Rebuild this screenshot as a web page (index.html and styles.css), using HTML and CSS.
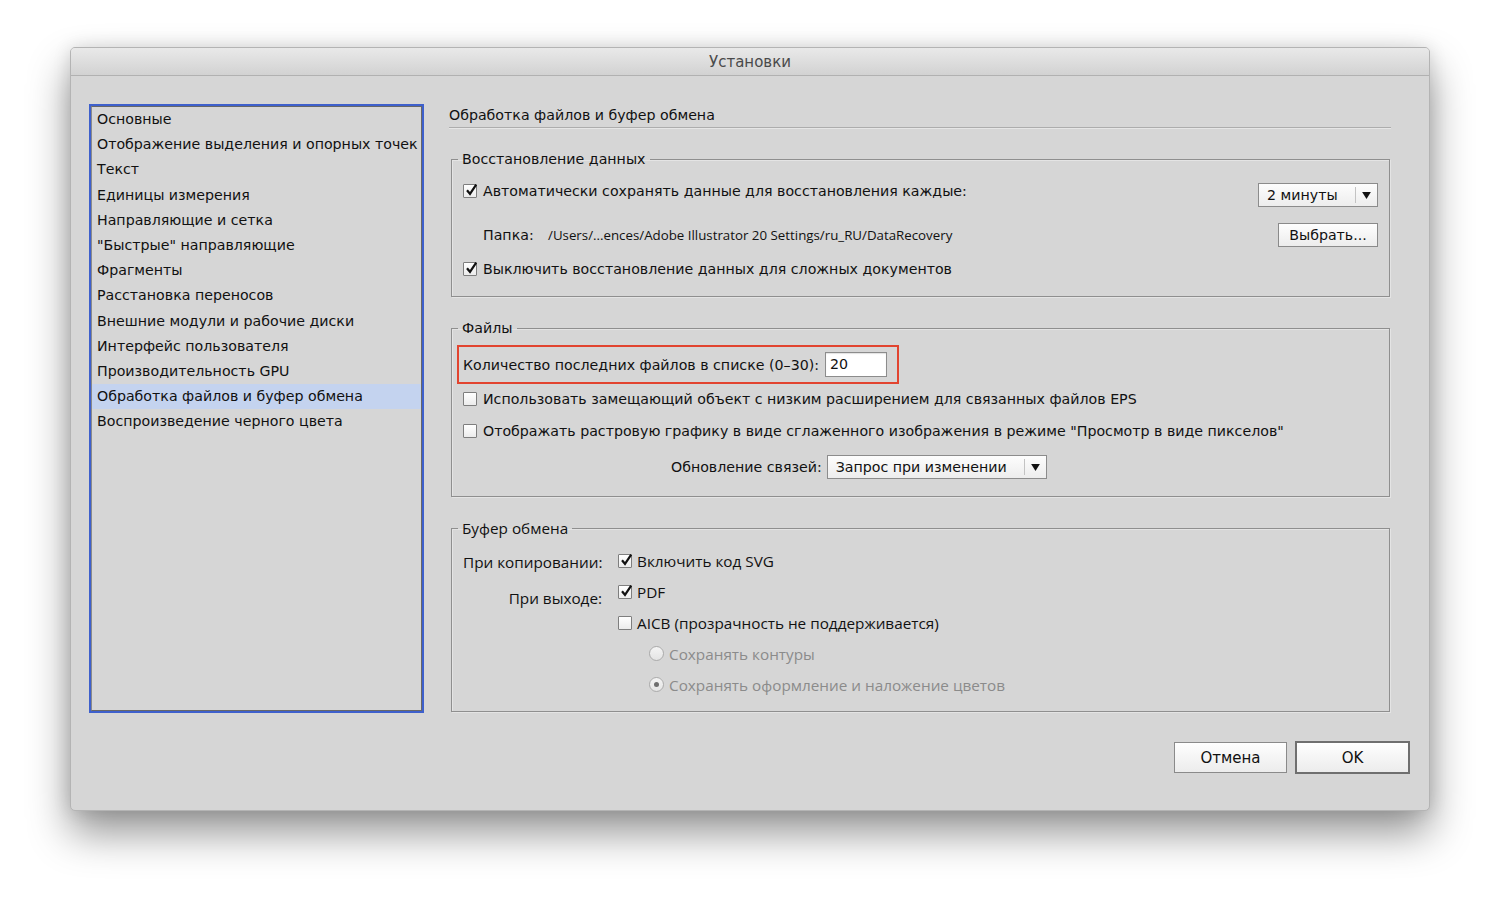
FILE: index.html
```html
<!DOCTYPE html>
<html lang="ru">
<head>
<meta charset="utf-8">
<title>Установки</title>
<link rel="stylesheet" href="styles.css">
</head>
<body>
<div class="window">
  <div class="titlebar">Установки</div>
  <div class="body">
    <div class="sidebar">
      <ul class="nav">
        <li>Основные</li>
        <li>Отображение выделения и опорных точек</li>
        <li>Текст</li>
        <li>Единицы измерения</li>
        <li>Направляющие и сетка</li>
        <li>"Быстрые" направляющие</li>
        <li>Фрагменты</li>
        <li>Расстановка переносов</li>
        <li>Внешние модули и рабочие диски</li>
        <li>Интерфейс пользователя</li>
        <li>Производительность GPU</li>
        <li class="selected">Обработка файлов и буфер обмена</li>
        <li>Воспроизведение черного цвета</li>
      </ul>
    </div>
    <div class="main">
      <div class="heading">Обработка файлов и буфер обмена</div>

      <fieldset class="group g1">
        <legend>Восстановление данных</legend>
        <div class="row r1">
          <label class="check">
            <span class="cb"><svg viewBox="0 0 14 14" width="14" height="14"><path d="M3 7.2 L6 10.8 L12.2 1.6" fill="none" stroke="#111" stroke-width="2.2"/></svg></span>
            <span>Автоматически сохранять данные для восстановления каждые:</span>
          </label>
          <div class="select s-min"><span class="val">2 минуты</span><span class="arrow"><svg viewBox="0 0 10 8" width="9" height="7"><path d="M0 0 H10 L5 8 Z" fill="#111"/></svg></span></div>
        </div>
        <div class="row r2">
          <span class="folder-label">Папка:</span>
          <span class="path">/Users/...ences/Adobe Illustrator 20 Settings/ru_RU/DataRecovery</span>
          <button class="btn btn-choose">Выбрать...</button>
        </div>
        <div class="row r3">
          <label class="check">
            <span class="cb"><svg viewBox="0 0 14 14" width="14" height="14"><path d="M3 7.2 L6 10.8 L12.2 1.6" fill="none" stroke="#111" stroke-width="2.2"/></svg></span>
            <span>Выключить восстановление данных для сложных документов</span>
          </label>
        </div>
      </fieldset>

      <fieldset class="group g2">
        <legend>Файлы</legend>
        <div class="highlight">
          <span>Количество последних файлов в списке (0–30):</span>
          <span class="input">20</span>
        </div>
        <div class="row r4">
          <label class="check"><span class="cb"></span><span>Использовать замещающий объект с низким расширением для связанных файлов EPS</span></label>
        </div>
        <div class="row r5">
          <label class="check"><span class="cb"></span><span>Отображать растровую графику в виде сглаженного изображения в режиме "Просмотр в виде пикселов"</span></label>
        </div>
        <div class="row r6">
          <span class="links-label">Обновление связей:</span>
          <div class="select s-links"><span class="val">Запрос при изменении</span><span class="arrow"><svg viewBox="0 0 10 8" width="9" height="7"><path d="M0 0 H10 L5 8 Z" fill="#111"/></svg></span></div>
        </div>
      </fieldset>

      <fieldset class="group g3">
        <legend>Буфер обмена</legend>
        <div class="clip">
          <div class="clabel l1">При копировании:</div>
          <div class="copt">
            <label class="check"><span class="cb"><svg viewBox="0 0 14 14" width="14" height="14"><path d="M3 7.2 L6 10.8 L12.2 1.6" fill="none" stroke="#111" stroke-width="2.2"/></svg></span><span>Включить код SVG</span></label>
          </div>
          <div class="clabel l2">При выходе:</div>
          <div class="copt">
            <label class="check"><span class="cb"><svg viewBox="0 0 14 14" width="14" height="14"><path d="M3 7.2 L6 10.8 L12.2 1.6" fill="none" stroke="#111" stroke-width="2.2"/></svg></span><span>PDF</span></label>
          </div>
          <div class="clabel"></div>
          <div class="copt">
            <label class="check"><span class="cb"></span><span>AICB (прозрачность не поддерживается)</span></label>
          </div>
          <div class="clabel"></div>
          <div class="copt radio-opt">
            <label class="radio"><span class="rb"></span><span>Сохранять контуры</span></label>
          </div>
          <div class="clabel"></div>
          <div class="copt radio-opt">
            <label class="radio"><span class="rb on"></span><span>Сохранять оформление и наложение цветов</span></label>
          </div>
        </div>
      </fieldset>
    </div>
  </div>
  <div class="footer">
    <button class="btn btn-cancel">Отмена</button>
    <button class="btn btn-ok">OK</button>
  </div>
</div>
</body>
</html>
```

FILE: styles.css
```css
* { box-sizing: border-box; }

html, body {
  margin: 0;
  padding: 0;
  background: #ffffff;
}

body {
  font-family: "DejaVu Sans", "Noto Sans", sans-serif;
  font-size: 14.2px;
  color: #111;
  padding: 47px 70px 0 70px;
  min-height: 904px;
}

.window {
  width: 1360px;
  height: 764px;
  background: #d6d6d6;
  border-radius: 5px;
  border: 1px solid #b4b4b4;
  box-shadow: 0 22px 42px rgba(0, 0, 0, 0.42), 0 0 18px rgba(0, 0, 0, 0.12);
  display: flex;
  flex-direction: column;
  overflow: hidden;
}

.titlebar {
  height: 28px;
  flex: none;
  background: linear-gradient(#e9e9e9, #d2d2d2);
  border-bottom: 1px solid #b1b1b1;
  text-align: center;
  line-height: 29px;
  font-size: 15px;
  color: #4a4a4a;
}

.body {
  display: flex;
  padding: 28px 0 0 18px;
}

.sidebar {
  width: 335px;
  height: 609px;
  flex: none;
  border: 2px solid #3e60cc;
  padding: 0;
}

.nav {
  list-style: none;
  margin: 0;
  padding: 0;
  height: 100%;
  border: 1px solid #676767;
  border-left-color: #8a8a8a;
}

.nav li {
  height: 25.2px;
  line-height: 25.2px;
  padding-left: 5px;
  white-space: nowrap;
}

.nav li.selected {
  background: #c4d3ef;
}

.main {
  width: 942px;
  margin-left: 25px;
}

.heading {
  padding: 2px 0 3px 0;
  line-height: 18px;
  border-bottom: 1px solid #adadad;
  box-shadow: 0 1px 0 #e6e6e6;
}

.group {
  margin: 22px 1px 0 2px;
  padding: 0 11px;
  border: 1px solid #8f8f8f;
  box-shadow: inset 1px 1px 0 #e4e4e4, 1px 1px 0 #e4e4e4;
  min-width: 0;
}

.group legend {
  padding: 0 5px 0 4px;
  margin-left: -5px;
  line-height: 18px;
}

.row {
  display: flex;
  align-items: center;
}

.check, .radio {
  display: flex;
  align-items: center;
  gap: 6px;
  white-space: nowrap;
}

.cb {
  width: 14px;
  height: 14px;
  flex: none;
  border: 1px solid #7e7e7e;
  background: linear-gradient(#ffffff, #ececec);
  display: flex;
  align-items: center;
  justify-content: center;
  position: relative;
  border-radius: 1px;
}

.cb svg {
  position: absolute;
  left: 0;
  top: -2px;
  overflow: visible;
}

.rb {
  width: 15px;
  height: 15px;
  flex: none;
  border-radius: 50%;
  border: 1px solid #ababab;
  background: linear-gradient(#f4f4f4, #e4e4e4);
  display: flex;
  align-items: center;
  justify-content: center;
}

.rb.on::after {
  content: "";
  width: 5px;
  height: 5px;
  border-radius: 50%;
  background: #6e6e6e;
}

/* group 1 */
.g1 { padding-bottom: 18px; }

.r1 {
  margin-top: 14px;
  height: 25px;
  align-items: flex-start;
  justify-content: space-between;
}

.r1 .check { height: 18px; }

.select {
  display: flex;
  align-items: center;
  height: 24px;
  border: 1px solid #8c8c8c;
  background: linear-gradient(#fdfdfd, #ededed);
  font-size: 14.2px;
}

.select .val {
  flex: 1;
  padding-left: 8px;
  white-space: nowrap;
}

.select .arrow {
  width: 22px;
  height: 16px;
  border-left: 1px solid #c3c3c3;
  display: flex;
  align-items: center;
  justify-content: center;
}

.s-min {
  width: 120px;
  margin-top: 1px;
  margin-right: 0;
}

.r2 {
  margin-top: 16px;
  height: 24px;
  padding-left: 20px;
}

.folder-label {
  width: 65px;
  flex: none;
}

.path {
  flex: 1;
  font-family: "Open Sans", "DejaVu Sans", sans-serif;
  font-size: 13.3px;
  white-space: nowrap;
}

.btn {
  font-family: "DejaVu Sans", "Noto Sans", sans-serif;
  font-size: 14.2px;
  color: #111;
  background: linear-gradient(#fefefe, #ececec);
  border: 1px solid #8a8a8a;
  padding: 0;
  height: 24px;
}

.btn-choose {
  width: 100px;
  margin-right: 0;
}

.r3 {
  margin-top: 13px;
  height: 18px;
}

/* group 2 */
.g2 { padding-bottom: 17px; }

.highlight {
  margin: 8px 0 0 -6px;
  width: 442px;
  height: 39px;
  border: 2px solid #e2442f;
  display: flex;
  align-items: center;
  padding-left: 4px;
  gap: 6px;
  white-space: nowrap;
}

.input {
  width: 62px;
  height: 25px;
  background: #ffffff;
  border: 1px solid #8c8c8c;
  box-shadow: inset 0 1px 1px rgba(0, 0, 0, 0.12);
  line-height: 23px;
  padding-left: 4px;
}

.r4 { margin-top: 6px; height: 18px; }
.r5 { margin-top: 14px; height: 18px; }

.r6 {
  margin-top: 15px;
  height: 24px;
  padding-left: 208px;
  gap: 5px;
}

.s-links { width: 220px; }

/* group 3 */
.g3 {
  padding-bottom: 11px;
  font-family: "Open Sans", "DejaVu Sans", sans-serif;
  font-size: 15.3px;
}

.g3 legend { padding-right: 4px; }

.clip {
  margin-top: 8px;
  display: grid;
  grid-template-columns: 155px 1fr;
  grid-auto-rows: 31px;
}

.clabel {
  text-align: right;
  padding-right: 16px;
  line-height: 18px;
  white-space: nowrap;
}

.clabel.l1 { padding-top: 8px; }
.clabel.l2 { padding-top: 13px; }

.copt {
  display: flex;
  align-items: center;
}

.copt .check { gap: 5px; }

.radio-opt {
  padding-left: 31px;
  color: #8b8b8b;
}

.radio { gap: 5px; }

/* footer */
.footer {
  display: flex;
  justify-content: flex-end;
  align-items: center;
  gap: 8px;
  margin-top: 28px;
  padding-right: 19px;
}

.btn-cancel {
  width: 113px;
  height: 31px;
  font-size: 15px;
}

.btn-ok {
  width: 115px;
  height: 33px;
  font-size: 15px;
  border: 2px solid #6f6f6f;
}
```
